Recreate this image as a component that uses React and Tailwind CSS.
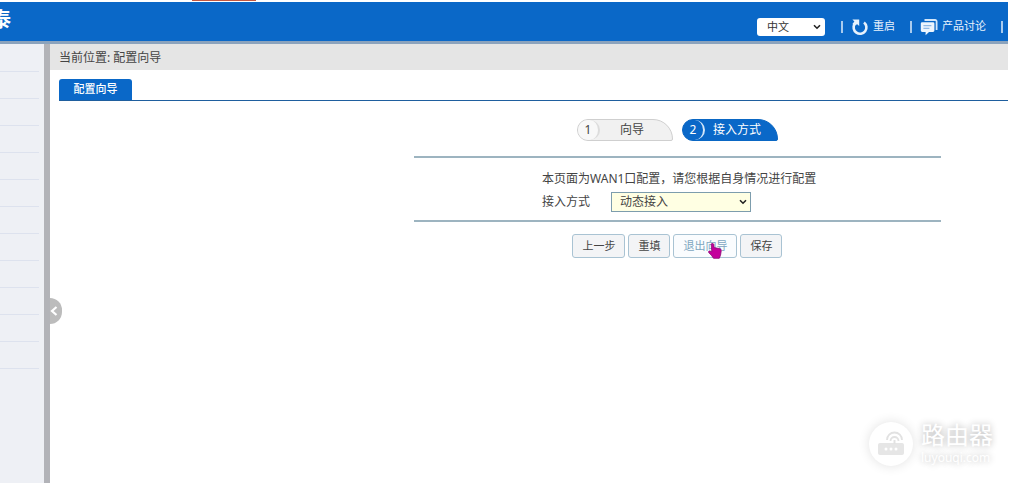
import { useState } from 'react';

const MENU_ROWS = 12;

function Chevron({ className }) {
  return (
    <svg className={className} viewBox="0 0 8 6" fill="none" stroke="#222" strokeWidth={1.6}>
      <path d="M1 1.2 4 4.2 7 1.2" />
    </svg>
  );
}

function RestartIcon() {
  return (
    <svg className="h-[18px] w-[18px]" viewBox="0 0 18 18" fill="none">
      <path d="M13 4.4A6.4 6.4 0 1 1 3.6 6" stroke="#e6f1fc" strokeWidth={2.6} />
      <path d="M1.4 1.4h6.8V8l-2-1.8L3 7.8 1.400 6l2-2.400z" fill="#e6f1fc" />
    </svg>
  );
}

function DiscussIcon() {
  return (
    <svg className="h-[18px] w-[18px]" viewBox="0 0 18 18" fill="none">
      <path d="M4.5 2h10.6a1.5 1.5 0 0 1 1.5 1.5V12" stroke="#d3e6f9" strokeWidth={1.8} />
      <path
        d="M2.2 4.2H13a1.4 1.4 0 0 1 1.4 1.4v7A1.4 1.4 0 0 1 13 14H9l-3.4 3.2V14H2.2a1.4 1.4 0 0 1-1.4-1.4v-7a1.4 1.4 0 0 1 1.4-1.4z"
        fill="#edf5fd"
      />
      <path d="M3.4 7.6h8M3.4 10.4h6" stroke="#8fb9e6" strokeWidth={1.1} />
    </svg>
  );
}

function Divider() {
  return <span className="h-3 w-0.5 bg-[#a9cbee]" />;
}

function Step({ number, label, active }) {
  return (
    <li
      className={`flex h-[22px] w-24 items-center rounded-l-[11px] rounded-tr-[20px] rounded-br-[2px] border text-xs ${
        active ? 'border-[#0a67c4] bg-[#0a68c8] text-white' : 'border-[#cfcfcf] bg-[#f1f1f1] text-[#444]'
      }`}
    >
      <span
        className={`flex h-5 w-[22px] shrink-0 items-center justify-center rounded-full border-r-2 ${
          active ? 'border-[#d5e7f9]' : 'border-[#dcdcdc] bg-[#f8f8f8]'
        }`}
      >
        {number}
      </span>
      <span className="flex-1 pr-2 text-center">{label}</span>
    </li>
  );
}

function Header() {
  const [lang, setLang] = useState('zh');

  return (
    <header className="mt-0.5 flex h-[42px] items-center justify-between overflow-hidden border-b-[3px] border-[#8ba3bd] bg-[#0a68c8] pr-[5px] text-[11px] text-[#e8f2fc]">
      <span className="-ml-[9px] self-start pt-1.5 text-xl leading-6 font-bold text-white">泰</span>

      <div className="flex items-center pt-2.5">
        <div className="relative mr-4">
          <select
            aria-label="语言"
            value={lang}
            onChange={(e) => setLang(e.target.value)}
            className="block h-[18px] w-[68px] appearance-none rounded-[3px] bg-white pl-2.5 text-[11px] leading-4 text-[#333]"
          >
            <option value="zh">中文</option>
            <option value="en">English</option>
          </select>
          <Chevron className="pointer-events-none absolute top-1.5 right-1 h-1.5 w-2" />
        </div>
        <Divider />
        <a href="#restart" className="mr-[15px] ml-2 flex items-center gap-1">
          <RestartIcon />
          重启
        </a>
        <Divider />
        <a href="#discuss" className="mr-[15px] ml-2 flex items-center gap-1">
          <DiscussIcon />
          产品讨论
        </a>
        <Divider />
      </div>
    </header>
  );
}

function Sidebar() {
  return (
    <aside className="relative w-[50px] shrink-0 border-r-[6px] border-[#b2b3b8] bg-[#eef0f5] pt-px">
      <ul className="mr-[5px]">
        {Array.from({ length: MENU_ROWS }, (_, i) => (
          <li key={i} className="h-[27px] border-b border-[#dde2ee]" />
        ))}
      </ul>
      <button
        type="button"
        aria-label="收起菜单"
        className="absolute top-[254px] left-[50px] flex h-[26px] w-3 items-center rounded-r-full bg-[#bcbcbc]"
      >
        <svg className="h-2.5 w-2.5" viewBox="0 0 10 10" fill="none" stroke="white" strokeWidth={2.2}>
          <path d="M6.5 1 2 5 6.5 9" />
        </svg>
      </button>
    </aside>
  );
}

// hand pointer resting on the exit button
function Pointer() {
  return (
    <svg className="pointer-events-none absolute top-2 left-[34px] h-4 w-3.5" viewBox="0 0 14 16">
      <path
        d="M3.2 1.2c0-1 2.3-1 2.5 0l.4 3.4 5 .9c1.7.3 2.3 1.2 2.1 2.6l-.7 4.2-1.2 3H5.5l-2-2.9L.7 9.6C0 8.600 1.200 7.400 2.400 8.100l1.400.7z"
        fill="#c4009c"
        stroke="#8a0874"
        strokeWidth={0.8}
      />
    </svg>
  );
}

function FormButton({ children, hovered, ...props }) {
  return (
    <button
      type="button"
      className={`relative h-6 rounded-[3px] border border-[#a9c3d3] px-[9px] text-[11px] ${
        hovered ? 'bg-[#fafcfe] text-[#7da6c0]' : 'bg-[#f3f4f6] text-[#444]'
      }`}
      {...props}
    >
      {children}
    </button>
  );
}

function WizardForm() {
  const [mode, setMode] = useState('dhcp');

  return (
    <form className="mr-[7%] ml-[38%] pt-[18px]">
      <ol className="flex justify-center gap-[9px]">
        <Step number={1} label="向导" />
        <Step number={2} label="接入方式" active />
      </ol>

      <div className="mt-[15px] border-y-2 border-[#9db4c0] pt-3 pb-2 pl-32 text-xs text-[#444]">
        <p className="leading-[18px] whitespace-nowrap">本页面为WAN1口配置，请您根据自身情况进行配置</p>
        <div className="mt-1 flex items-center">
          <label htmlFor="mode" className="w-[69px]">接入方式</label>
          <div className="relative">
            <select
              id="mode"
              value={mode}
              onChange={(e) => setMode(e.target.value)}
              className="block h-5 w-[140px] appearance-none border border-[#7d9dad] bg-[#ffffe3] pl-2 text-xs leading-4 text-[#444]"
            >
              <option value="dhcp">动态接入</option>
              <option value="static">固定接入</option>
              <option value="pppoe">PPPoE接入</option>
            </select>
            <Chevron className="pointer-events-none absolute top-[7px] right-1 h-1.5 w-2" />
          </div>
        </div>
      </div>

      <div className="mt-3 flex justify-center gap-[3px]">
        <FormButton>上一步</FormButton>
        <FormButton>重填</FormButton>
        <FormButton hovered>
          退出向导
          <Pointer />
        </FormButton>
        <FormButton>保存</FormButton>
      </div>
    </form>
  );
}

function Watermark() {
  return (
    <div className="pointer-events-none absolute right-4 bottom-4 flex items-center gap-2">
      <div className="flex h-11 w-11 items-center justify-center rounded-full bg-white shadow-[0_0_12px_rgba(0,0,0,0.12)]">
        <svg className="h-7 w-7" viewBox="0 0 28 28" fill="none">
          <rect x="1" y="13" width="26" height="12" rx="2" fill="#e6e6e6" />
          <path d="M10 10a7.5 7.5 0 0 1 15 0M13.5 11a4 4 0 0 1 8 0" stroke="#e2e2e2" strokeWidth={1.8} />
          <path d="M17.5 10v4" stroke="#e2e2e2" strokeWidth={2} />
          <circle cx="9" cy="19" r="1.5" fill="white" />
          <circle cx="14" cy="19" r="1.5" fill="white" />
          <circle cx="19" cy="19" r="1.5" fill="white" />
        </svg>
      </div>
      <div className="text-white [text-shadow:0_0_7px_rgba(0,0,0,0.32)]">
        <div className="text-2xl leading-7">路由器</div>
        <div className="text-xs leading-[18px]">luyouqi.com</div>
      </div>
    </div>
  );
}

export default function App() {
  return (
    <div className="relative flex min-h-screen flex-col bg-white pr-px font-['Noto_Sans','Noto_Sans_CJK_SC',sans-serif]">
      <div className="absolute top-0 left-48 h-px w-16 bg-[#c4573f]" />
      <Header />
      <div className="flex flex-1">
        <Sidebar />
        <main className="min-w-0 flex-1">
          <div className="h-[26px] bg-[#e5e5e5] pl-[9px] text-xs leading-7 text-[#444]">
            当前位置: 配置向导
          </div>
          <div className="mt-[9px] ml-[9px] flex border-b border-[#1f5f9e]">
            <a
              href="#wizard"
              className="flex h-[21px] w-[73px] items-center justify-center rounded-t-[3px] bg-[#0a68c8] text-[11px] font-medium text-white"
            >
              配置向导
            </a>
          </div>
          <WizardForm />
        </main>
      </div>
      <Watermark />
    </div>
  );
}
